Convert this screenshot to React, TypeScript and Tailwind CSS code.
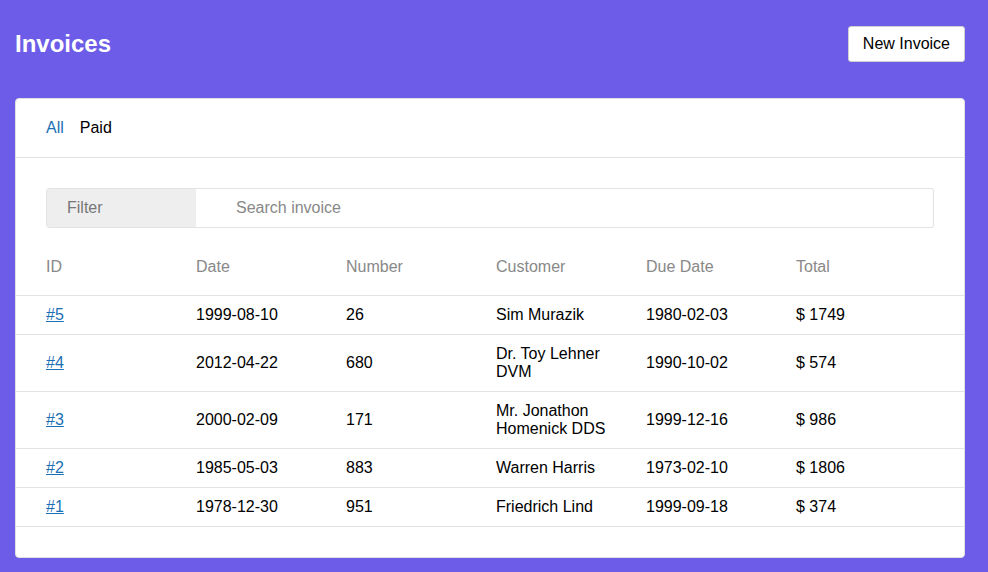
const invoices = [
  { id: 5, date: '1999-08-10', number: 26, customer: 'Sim Murazik', due: '1980-02-03', total: 1749 },
  { id: 4, date: '2012-04-22', number: 680, customer: 'Dr. Toy Lehner DVM', due: '1990-10-02', total: 574 },
  { id: 3, date: '2000-02-09', number: 171, customer: 'Mr. Jonathon Homenick DDS', due: '1999-12-16', total: 986 },
  { id: 2, date: '1985-05-03', number: 883, customer: 'Warren Harris', due: '1973-02-10', total: 1806 },
  { id: 1, date: '1978-12-30', number: 951, customer: 'Friedrich Lind', due: '1999-09-18', total: 374 },
];

const columns = ['ID', 'Date', 'Number', 'Customer', 'Due Date', 'Total'];

export default function App() {
  return (
    <div className="min-h-[572px] bg-[#6c5ce7] px-[15px] pb-[15px] font-['Liberation_Sans',Arial,sans-serif] text-[16px] leading-[18px] text-black">
      <div className="w-[950px]">
        {/* Header */}
        <header className="flex items-center justify-between h-[88px]">
          <h1 className="text-[24px] leading-[28px] font-bold text-white">Invoices</h1>
          <button className="h-[36px] px-[14px] bg-white rounded-[3px] border border-[#d0d0d0] text-[16px] leading-[18px]">
            New Invoice
          </button>
        </header>

        {/* Card */}
        <div className="mt-[10px] bg-white rounded-[4px] border border-[#e0e0e0]">
          {/* Tabs */}
          <nav className="flex gap-[16px] px-[30px] h-[59px] items-center border-b border-[#e2e2e2]">
            <span className="text-[#1b6fb3]">All</span>
            <span>Paid</span>
          </nav>

          <div className="px-[30px] pt-[30px] pb-[10px]">
            <div className="flex h-[40px] border border-[#e2e2e2] rounded-[3px] overflow-hidden">
              <div className="w-[149px] bg-[#eeeeee] flex items-center pl-[20px] text-[#777]">Filter</div>
              <input
                className="flex-1 pl-[40px] outline-none placeholder:text-[#888]"
                placeholder="Search invoice"
              />
            </div>
          </div>

          <table className="w-full border-collapse table-fixed mb-[30px]">
            <thead>
              <tr className="border-b border-[#e2e2e2]">
                {columns.map((c, i) => (
                  <th
                    key={c}
                    className={`${i === 5 ? 'w-auto' : 'w-[150px]'} pl-[30px] pr-[4px] pt-[20px] pb-[19px] text-left font-normal text-[#888]`}
                  >
                    {c}
                  </th>
                ))}
              </tr>
            </thead>
            <tbody>
              {invoices.map(inv => (
                <tr key={inv.id} className="border-b border-[#e2e2e2]">
                  <td className="pl-[30px] py-[10px]">
                    <a href="#" className="text-[#1b6fb3] underline">#{inv.id}</a>
                  </td>
                  <td className="pl-[30px] py-[10px]">{inv.date}</td>
                  <td className="pl-[30px] py-[10px]">{inv.number}</td>
                  <td className="pl-[30px] pr-[4px] py-[10px]">{inv.customer}</td>
                  <td className="pl-[30px] py-[10px]">{inv.due}</td>
                  <td className="pl-[30px] py-[10px]">$ {inv.total}</td>
                </tr>
              ))}
            </tbody>
          </table>
        </div>
      </div>
    </div>
  );
}
